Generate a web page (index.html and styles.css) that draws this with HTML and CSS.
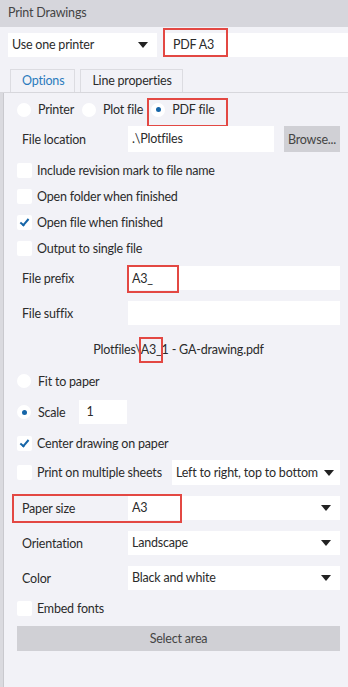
FILE: index.html
```html
<!DOCTYPE html>
<html lang="en">
<head>
  <meta charset="UTF-8">
  <title>Print Drawings</title>
  <link rel="stylesheet" href="styles.css">
</head>
<body>
  <div class="header">Print Drawings</div>

  <div class="panel">
    <div class="top-row">
      <div class="select printer-mode">
        <span>Use one printer</span>
        <span class="arrow"></span>
      </div>
      <div class="input printer-name">
        PDF A3
        <span class="mark mark-printer"></span>
      </div>
    </div>

    <div class="tabs">
      <div class="tab active">Options</div>
      <div class="tab">Line properties</div>
    </div>

    <div class="content">
      <div class="row radios">
        <label class="radio"><span class="dot"></span>Printer</label>
        <label class="radio"><span class="dot"></span>Plot file</label>
        <label class="radio checked"><span class="dot"></span>PDF file</label>
        <span class="mark mark-pdf"></span>
      </div>

      <div class="row field">
        <span class="label">File location</span>
        <div class="input grow">.\Plotfiles</div>
        <button class="button browse">Browse...</button>
      </div>

      <div class="row check-row first-check">
        <span class="box"></span>Include revision mark to file name
      </div>
      <div class="row check-row">
        <span class="box"></span>Open folder when finished
      </div>
      <div class="row check-row">
        <span class="box checked"></span>Open file when finished
      </div>
      <div class="row check-row">
        <span class="box"></span>Output to single file
      </div>

      <div class="row field prefix-row">
        <span class="label">File prefix</span>
        <div class="input grow">A3_</div>
        <span class="mark mark-prefix"></span>
      </div>
      <div class="row field suffix-row">
        <span class="label">File suffix</span>
        <div class="input grow"></div>
      </div>

      <div class="row path-row">
        <span class="path">Plotfiles\<span class="path-mark">A3_</span>1 - GA-drawing.pdf</span>
      </div>

      <div class="row fit-row">
        <label class="radio"><span class="dot"></span>Fit to paper</label>
      </div>
      <div class="row scale-row">
        <label class="radio checked"><span class="dot"></span>Scale</label>
        <div class="input scale-input">1</div>
      </div>

      <div class="row check-row center-row">
        <span class="box checked"></span>Center drawing on paper
      </div>
      <div class="row check-row sheets-row">
        <span class="box"></span>Print on multiple sheets
        <div class="select sheets-select">
          <span>Left to right, top to bottom</span>
          <span class="arrow"></span>
        </div>
      </div>

      <div class="row field paper-row">
        <span class="label">Paper size</span>
        <div class="select grow">
          <span>A3</span>
          <span class="arrow"></span>
        </div>
        <span class="mark mark-paper"></span>
      </div>
      <div class="row field drop-row">
        <span class="label">Orientation</span>
        <div class="select grow">
          <span>Landscape</span>
          <span class="arrow"></span>
        </div>
      </div>
      <div class="row field drop-row">
        <span class="label">Color</span>
        <div class="select grow">
          <span>Black and white</span>
          <span class="arrow"></span>
        </div>
      </div>

      <div class="row check-row embed-row">
        <span class="box"></span>Embed fonts
      </div>

      <button class="button select-area">Select area</button>
    </div>
  </div>
</body>
</html>
```

FILE: styles.css
```css
html, body {
  margin: 0;
  padding: 0;
}

body {
  width: 348px;
  height: 687px;
  overflow: hidden;
  font-family: Lato, 'Open Sans', sans-serif;
  font-size: 12.5px;
  letter-spacing: -0.2px;
  color: #2b2b2b;
  background-color: #f2f2f7;
}

.header {
  height: 27px;
  line-height: 25px;
  padding-left: 8px;
  background-color: #d6d6dc;
  color: #444;
}

.panel {
  background-color: #f2f2f7;
}

.top-row {
  display: flex;
  gap: 7px;
  padding: 6px 0 0 8px;
  height: 24px;
}

.input, .select {
  background-color: #fff;
  height: 24px;
  line-height: 24px;
  padding: 0 4px;
  box-sizing: border-box;
  white-space: nowrap;
  position: relative;
}

.select {
  display: flex;
  justify-content: space-between;
  align-items: center;
  padding-right: 9px;
}

.arrow {
  width: 0;
  height: 0;
  border-left: 5px solid transparent;
  border-right: 5px solid transparent;
  border-top: 6px solid #222;
}

.printer-mode {
  width: 149px;
  padding-left: 4px;
}

.printer-name {
  flex: 1;
  padding-left: 9px;
}

.mark {
  position: absolute;
  border: 2px solid #e34843;
  box-sizing: border-box;
  pointer-events: none;
}

.mark-printer {
  left: -1px;
  top: -5px;
  width: 65px;
  height: 29px;
}

.tabs {
  display: flex;
  gap: 5px;
  margin-top: 12px;
  padding-left: 10px;
  border-bottom: 1px solid #d7d7dc;
}

.tab {
  height: 22px;
  line-height: 22px;
  padding: 0 10px 0 11px;
  border: 1px solid #dcdce1;
  border-bottom: none;
  background-color: #f2f2f7;
}

.tab.active {
  color: #2b7bbd;
}

.content {
  border-left: 3px solid #dadadf;
  box-shadow: inset 1px 0 0 #c9c9ce;
  padding: 0 8px 40px 14px;
  display: flex;
  flex-direction: column;
}

.row {
  display: flex;
  align-items: center;
  position: relative;
  white-space: nowrap;
}

.radios {
  height: 33px;
  gap: 8px;
}

.radio {
  display: flex;
  align-items: center;
  gap: 7px;
}

.dot {
  width: 14px;
  height: 14px;
  border-radius: 50%;
  background-color: #fff;
  display: flex;
  align-items: center;
  justify-content: center;
}

.radio.checked .dot::after {
  content: "";
  width: 5px;
  height: 5px;
  border-radius: 50%;
  background-color: #1565a8;
}

.mark-pdf {
  left: 130px;
  top: 5px;
  width: 81px;
  height: 29px;
}

.field {
  height: 26px;
}

.label {
  width: 106px;
  padding-left: 5px;
  flex-shrink: 0;
}

.grow {
  flex: 1;
}

.field .input, .field .select {
  height: 100%;
  line-height: 26px;
}

.button {
  font-family: inherit;
  font-size: inherit;
  letter-spacing: inherit;
  color: #444;
  background-color: #d0d0d5;
  border: none;
  padding: 0;
}

.browse {
  width: 56px;
  height: 26px;
  margin-left: 10px;
}

.check-row {
  height: 26px;
  gap: 5px;
}

.first-check {
  margin-top: 5px;
}

.box {
  width: 15px;
  height: 15px;
  border-radius: 2px;
  background-color: #fff;
  position: relative;
  flex-shrink: 0;
}

.box.checked::after {
  content: "";
  position: absolute;
  left: 5px;
  top: 2px;
  width: 3px;
  height: 7px;
  border: solid #1565a8;
  border-width: 0 2px 2px 0;
  transform: rotate(40deg);
}

.prefix-row {
  margin-top: 5px;
  height: 24px;
}

.mark-prefix {
  left: 110px;
  top: -1px;
  width: 52px;
  height: 28px;
}

.suffix-row {
  margin-top: 11px;
  height: 24px;
}

.path-row {
  margin-top: 12px;
  height: 24px;
  justify-content: center;
}

.path-mark {
  display: inline-block;
  position: relative;
}

.path-mark::after {
  content: "";
  position: absolute;
  left: -2px;
  right: -1px;
  top: -5px;
  bottom: -6px;
  border: 2px solid #e34843;
}

.fit-row {
  margin-top: 8px;
  height: 24px;
}

.scale-row {
  margin-top: 7px;
  height: 24px;
  gap: 14px;
}

.scale-input {
  width: 48px;
  line-height: 24px;
  padding-left: 7px;
}

.center-row {
  margin-top: 6px;
}

.sheets-row {
  margin-top: 4px;
  height: 25px;
}

.sheets-select {
  margin-left: auto;
  width: 168px;
  height: 25px;
  padding-right: 6px;
}

.paper-row {
  margin-top: 11px;
  height: 24px;
}

.mark-paper {
  left: -5px;
  top: -2px;
  width: 170px;
  height: 29px;
}

.drop-row {
  margin-top: 11px;
  height: 24px;
}

.embed-row {
  margin-top: 6px;
  height: 24px;
}

.select-area {
  margin-top: 6px;
  height: 25px;
  width: 100%;
}
```
